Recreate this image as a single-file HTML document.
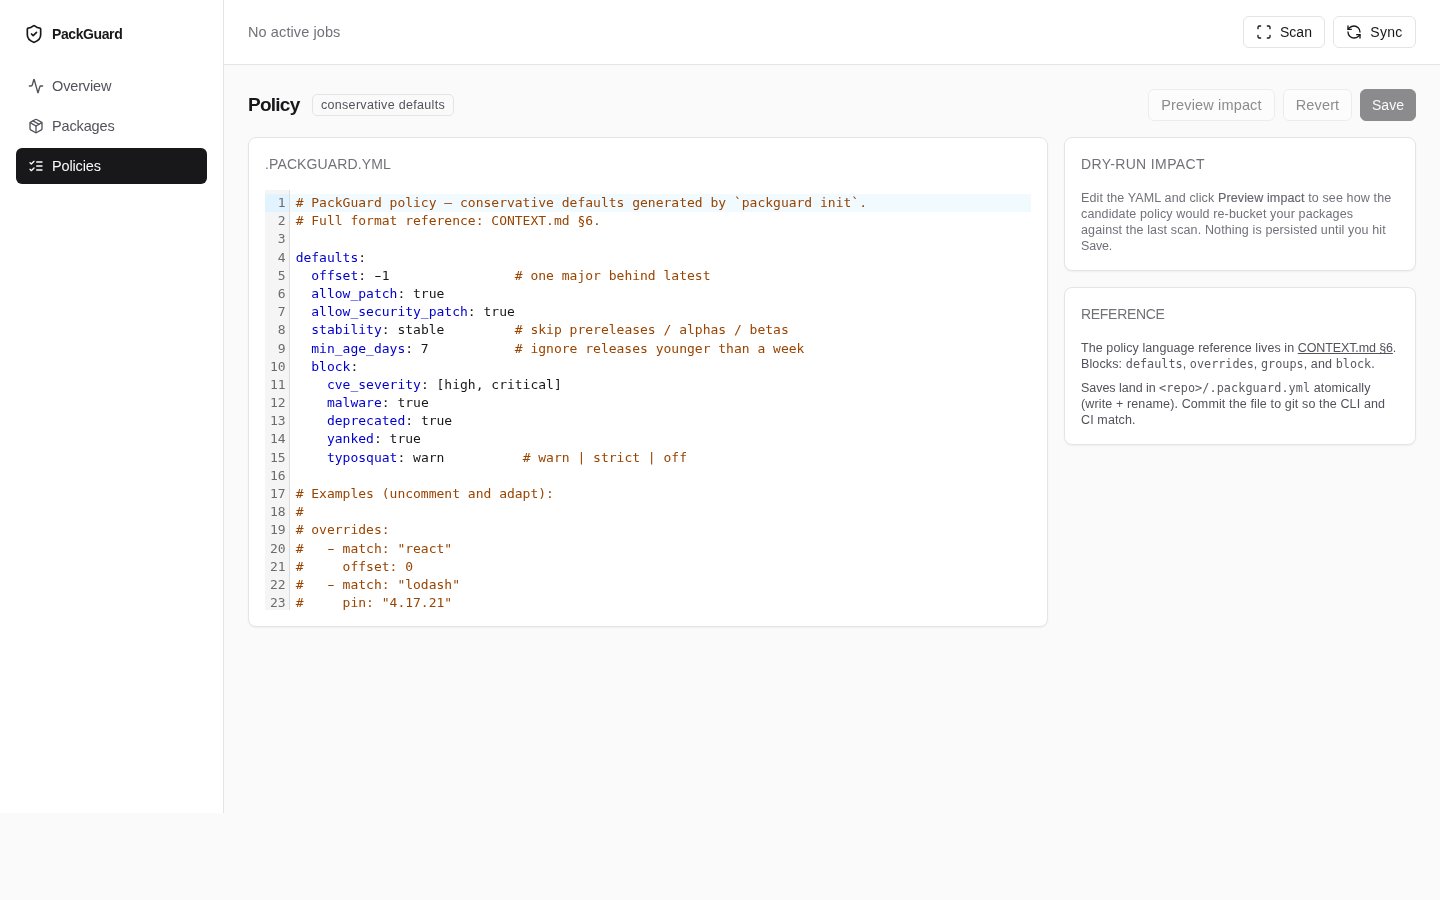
<!DOCTYPE html>
<html lang="en">
<head>
<meta charset="utf-8">
<title>PackGuard</title>
<style>
*{box-sizing:border-box;margin:0;padding:0}
html,body{width:1440px;height:900px;overflow:hidden}
body{background:#fafafa;font-family:"Liberation Sans",sans-serif;color:#18181b;font-size:14px;line-height:20px;position:relative}
#app{position:absolute;left:0;top:0;width:1440px;height:900px;will-change:transform}
.side{position:absolute;left:0;top:0;width:224px;height:813px;background:#fff;border-right:1px solid #e4e4e7}
.brand{position:absolute;left:24px;top:24px;height:20px;display:flex;align-items:center}
.brand svg{width:20px;height:20px;display:block}
.brand span{margin-left:8px;font-weight:700;font-size:14px;color:#18181b;letter-spacing:-.4px}
.nav{position:absolute;left:16px;top:68px;width:191px}
.nav a{display:flex;align-items:center;height:36px;margin-bottom:4px;border-radius:6px;padding-left:12px;color:#52525b;font-size:14.5px;text-decoration:none;letter-spacing:-.15px}
.nav a svg{width:16px;height:16px;margin-right:8px;display:block}
.nav a.on{background:#18181b;color:#fafafa}
.top{position:absolute;left:224px;top:0;width:1216px;height:65px;background:#fff;border-bottom:1px solid #e4e4e7}
.top .msg{position:absolute;left:24px;top:22px;color:#71717a;font-size:14.5px;letter-spacing:.1px}
.btn{position:absolute;height:32px;border:1px solid #e4e4e7;border-radius:6px;background:#fff;display:flex;align-items:center;justify-content:center;font-size:14px;color:#18181b}
.btn svg{width:16px;height:16px;margin-right:8px;display:block}
h1{position:absolute;left:248px;top:91px;font-size:19px;line-height:28px;font-weight:700;letter-spacing:-.75px;color:#18181b}
.badge{position:absolute;left:312px;top:94px;width:142px;height:22px;border:1px solid #e4e4e7;border-radius:5px;background:#fafafa;font-size:12.5px;letter-spacing:.32px;line-height:20px;text-align:center;color:#52525b}
.dis{color:#8c8c8e;border-color:#ececee;background:#fcfcfc;font-size:14.5px;letter-spacing:.15px}
.save{background:#8b8b8d;border-color:#8b8b8d;color:#fafafa}
.card{position:absolute;background:#fff;border:1px solid #e4e4e7;border-radius:8px;box-shadow:0 1px 2px rgba(0,0,0,.05);padding:16px}
.card h2{font-size:14px;line-height:20px;font-weight:400;color:#71717a;text-transform:uppercase;letter-spacing:.3px;margin-bottom:16px}
.card p{white-space:nowrap;font-size:12.5px;letter-spacing:.13px;line-height:16px;color:#71717a}
.card p b{font-weight:400;color:#66666f;-webkit-text-stroke:.15px #66666f}
.card p code{font-family:"DejaVu Sans Mono","Liberation Mono",monospace;font-size:11.8px;letter-spacing:0;color:#5a5a63}
.ed{position:relative;height:420px;overflow:hidden;font-family:"DejaVu Sans Mono","Liberation Mono",monospace;font-size:13px;line-height:18.2px;background:#fff}
.gut{position:absolute;left:0;top:0;width:24.65px;height:420px;background:#f5f5f5;border-right:1px solid #ddd;padding-top:4px;color:#6c6c6c;text-align:right}
.gut div{padding:0 3px 0 5px;height:18.2px}
.gut div.al{background:#e2f2ff}
.code{position:absolute;left:24.65px;top:0;right:0;padding-top:4px;white-space:pre;color:#18181b}
.code div{padding:0 2px 0 6px;height:18.2px}
.code div.al{background:#f1faff}
.h{display:inline-block;transform:scaleX(1.65)}
.c{color:#994400}.k{color:#0000cc}
</style>
</head>
<body>
<div id="app">
<div class="side">
  <div class="brand">
    <svg viewBox="0 0 24 24" fill="none" stroke="#18181b" stroke-width="2" stroke-linecap="round" stroke-linejoin="round"><path d="M20 13c0 5-3.500 7.500-7.660 8.950a1 1 0 0 1-.670-.010C7.500 20.500 4 18 4 13V6a1 1 0 0 1 1-1c2 0 4.500-1.200 6.240-2.720a1.170 1.170 0 0 1 1.520 0C14.510 3.810 17 5 19 5a1 1 0 0 1 1 1z"/><path d="m9 12 2 2 4-4"/></svg>
    <span>PackGuard</span>
  </div>
  <div class="nav">
    <a><svg viewBox="0 0 24 24" fill="none" stroke="currentColor" stroke-width="2" stroke-linecap="round" stroke-linejoin="round"><path d="M22 12h-2.480a2 2 0 0 0-1.930 1.460l-2.350 8.360a.250.250 0 0 1-.480 0L9.240 2.180a.250.250 0 0 0-.480 0l-2.350 8.360A2 2 0 0 1 4.490 12H2"/></svg>Overview</a>
    <a><svg viewBox="0 0 24 24" fill="none" stroke="currentColor" stroke-width="2" stroke-linecap="round" stroke-linejoin="round"><path d="M11 21.730a2 2 0 0 0 2 0l7-4A2 2 0 0 0 21 16V8a2 2 0 0 0-1-1.730l-7-4a2 2 0 0 0-2 0l-7 4A2 2 0 0 0 3 8v8a2 2 0 0 0 1 1.730z"/><path d="M12 22V12"/><path d="M3.290 7 12 12l8.710-5"/><path d="m7.500 4.270 9 5.150"/></svg>Packages</a>
    <a class="on"><svg viewBox="0 0 24 24" fill="none" stroke="currentColor" stroke-width="2" stroke-linecap="round" stroke-linejoin="round"><path d="m3 17 2 2 4-4"/><path d="m3 7 2 2 4-4"/><path d="M13 6h8"/><path d="M13 12h8"/><path d="M13 18h8"/></svg>Policies</a>
  </div>
</div>
<div class="top">
  <div class="msg">No active jobs</div>
</div>
<div class="btn" style="left:1243px;top:16px;width:82px"><svg viewBox="0 0 24 24" fill="none" stroke="currentColor" stroke-width="2" stroke-linecap="round" stroke-linejoin="round"><path d="M3 7V5a2 2 0 0 1 2-2h2"/><path d="M17 3h2a2 2 0 0 1 2 2v2"/><path d="M21 17v2a2 2 0 0 1-2 2h-2"/><path d="M7 21H5a2 2 0 0 1-2-2v-2"/></svg>Scan</div>
<div class="btn" style="left:1333px;top:16px;width:83px"><svg viewBox="0 0 24 24" fill="none" stroke="currentColor" stroke-width="2" stroke-linecap="round" stroke-linejoin="round"><path d="M21 12a9 9 0 0 0-9-9 9.750 9.750 0 0 0-6.740 2.740L3 8"/><path d="M3 3v5h5"/><path d="M3 12a9 9 0 0 0 9 9 9.750 9.750 0 0 0 6.740-2.740L21 16"/><path d="M16 16h5v5"/></svg><span style="letter-spacing:.3px">Sync</span></div>

<h1>Policy</h1>
<div class="badge">conservative defaults</div>
<div class="btn dis" style="left:1148px;top:89px;width:127px">Preview impact</div>
<div class="btn dis" style="left:1283px;top:89px;width:69px">Revert</div>
<div class="btn save" style="left:1360px;top:89px;width:56px">Save</div>

<div class="card" style="left:248px;top:137px;width:800px;height:490px">
  <h2 style="letter-spacing:.12px">.PACKGUARD.YML</h2>
  <div class="ed">
    <div class="code"><div class="al"><span class="c"># PackGuard policy — conservative defaults generated by `packguard init`.</span></div><div><span class="c"># Full format reference: CONTEXT.md §6.</span></div><div>&#8203;</div><div><span class="k">defaults</span>:</div><div>  <span class="k">offset</span>: <span class="h">-</span>1                <span class="c"># one major behind latest</span></div><div>  <span class="k">allow_patch</span>: true</div><div>  <span class="k">allow_security_patch</span>: true</div><div>  <span class="k">stability</span>: stable         <span class="c"># skip prereleases / alphas / betas</span></div><div>  <span class="k">min_age_days</span>: 7           <span class="c"># ignore releases younger than a week</span></div><div>  <span class="k">block</span>:</div><div>    <span class="k">cve_severity</span>: [high, critical]</div><div>    <span class="k">malware</span>: true</div><div>    <span class="k">deprecated</span>: true</div><div>    <span class="k">yanked</span>: true</div><div>    <span class="k">typosquat</span>: warn          <span class="c"># warn | strict | off</span></div><div>&#8203;</div><div><span class="c"># Examples (uncomment and adapt):</span></div><div><span class="c">#</span></div><div><span class="c"># overrides:</span></div><div><span class="c">#   <span class="h">-</span> match: "react"</span></div><div><span class="c">#     offset: 0</span></div><div><span class="c">#   <span class="h">-</span> match: "lodash"</span></div><div><span class="c">#     pin: "4.17.21"</span></div></div>
    <div class="gut"><div class="al">1</div><div>2</div><div>3</div><div>4</div><div>5</div><div>6</div><div>7</div><div>8</div><div>9</div><div>10</div><div>11</div><div>12</div><div>13</div><div>14</div><div>15</div><div>16</div><div>17</div><div>18</div><div>19</div><div>20</div><div>21</div><div>22</div><div>23</div></div>
  </div>
</div>

<div class="card" style="left:1064px;top:137px;width:352px;height:134px">
  <h2 style="letter-spacing:.37px">DRY-RUN IMPACT</h2>
  <p>Edit the YAML and click <b>Preview impact</b> to see how the<br>candidate policy would re-bucket your packages<br>against the last scan. Nothing is persisted until you hit<br><span style="letter-spacing:-.2px">Save.</span></p>
</div>
<div class="card" style="left:1064px;top:287px;width:352px;height:158px">
  <h2 style="letter-spacing:-.3px">REFERENCE</h2>
  <p style="color:#52525b"><span style="letter-spacing:.09px">The policy language reference lives in </span><u style="letter-spacing:-.12px">CONTEXT.md §6</u>.<br>Blocks: <code>defaults</code>, <code>overrides</code>, <code>groups</code>, and <code>block</code>.</p>
  <p style="margin-top:8px;color:#52525b"><span style="letter-spacing:-.03px">Saves land in </span><code style="letter-spacing:.09px">&lt;repo&gt;/.packguard.yml</code> atomically<br>(write + rename). Commit the file to git so the CLI and<br>CI match.</p>
</div>
</div>
</body>
</html>
